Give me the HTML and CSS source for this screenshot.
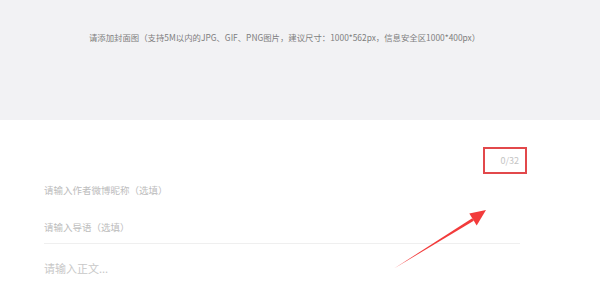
FILE: index.html
```html
<!DOCTYPE html>
<html lang="zh">
<head>
<meta charset="utf-8">
<link rel="stylesheet" href="styles.css">
</head>
<body>
<div class="cover">
  <p class="cover-hint">请添加封面图（支持5M以内的JPG、GIF、PNG图片，建议尺寸：1000*562px，信息安全区1000*400px）</p>
</div>
<div class="form">
  <div class="counter-row">
    <div class="counter">0/32</div>
  </div>
  <div class="field author">请输入作者微博昵称（选填）</div>
  <div class="field intro">请输入导语（选填）</div>
  <div class="field body-text">请输入正文...</div>
</div>
<svg class="arrow" width="600" height="294" viewBox="0 0 600 294">
  <polygon points="394,268.5 472.2,218.2 473.8,220.8" fill="#f23b3b"/>
  <polygon points="486,210 469.3,213.6 476.7,225.4" fill="#f23b3b"/>
</svg>
</body>
</html>
```
FILE: styles.css
```css
html, body {
  margin: 0;
  padding: 0;
  background: #ffffff;
  font-family: "Noto Sans CJK SC", "Noto Sans", sans-serif;
}
body {
  position: relative;
  width: 600px;
  height: 294px;
  overflow: hidden;
}
.cover {
  height: 120px;
  background: #f2f2f4;
  padding: 30px 0 0 89px;
  box-sizing: border-box;
}
.cover-hint {
  margin: 0;
  font-size: 8.4px;
  line-height: 14px;
  color: #7e7e7e;
  white-space: nowrap;
}
.form {
  padding: 0 80px 0 44px;
}
.counter-row {
  display: flex;
  justify-content: flex-end;
  margin-top: 27px;
  margin-right: -7px;
}
.counter {
  width: 34px;
  height: 23px;
  padding-right: 6px;
  border: 2px solid #e2484b;
  display: flex;
  align-items: center;
  justify-content: flex-end;
  font-size: 9px;
  color: #c4c4c4;
}
.field {
  color: #bdbdbd;
  font-size: 9.5px;
  line-height: 16px;
}
.author {
  margin-top: 8px;
}
.intro {
  margin-top: 21px;
  padding-bottom: 8px;
  border-bottom: 1px solid #efefef;
}
.body-text {
  margin-top: 15px;
  font-size: 11px;
  line-height: 18px;
  color: #c8c8c8;
}
.arrow {
  position: absolute;
  left: 0;
  top: 0;
  pointer-events: none;
}
```
